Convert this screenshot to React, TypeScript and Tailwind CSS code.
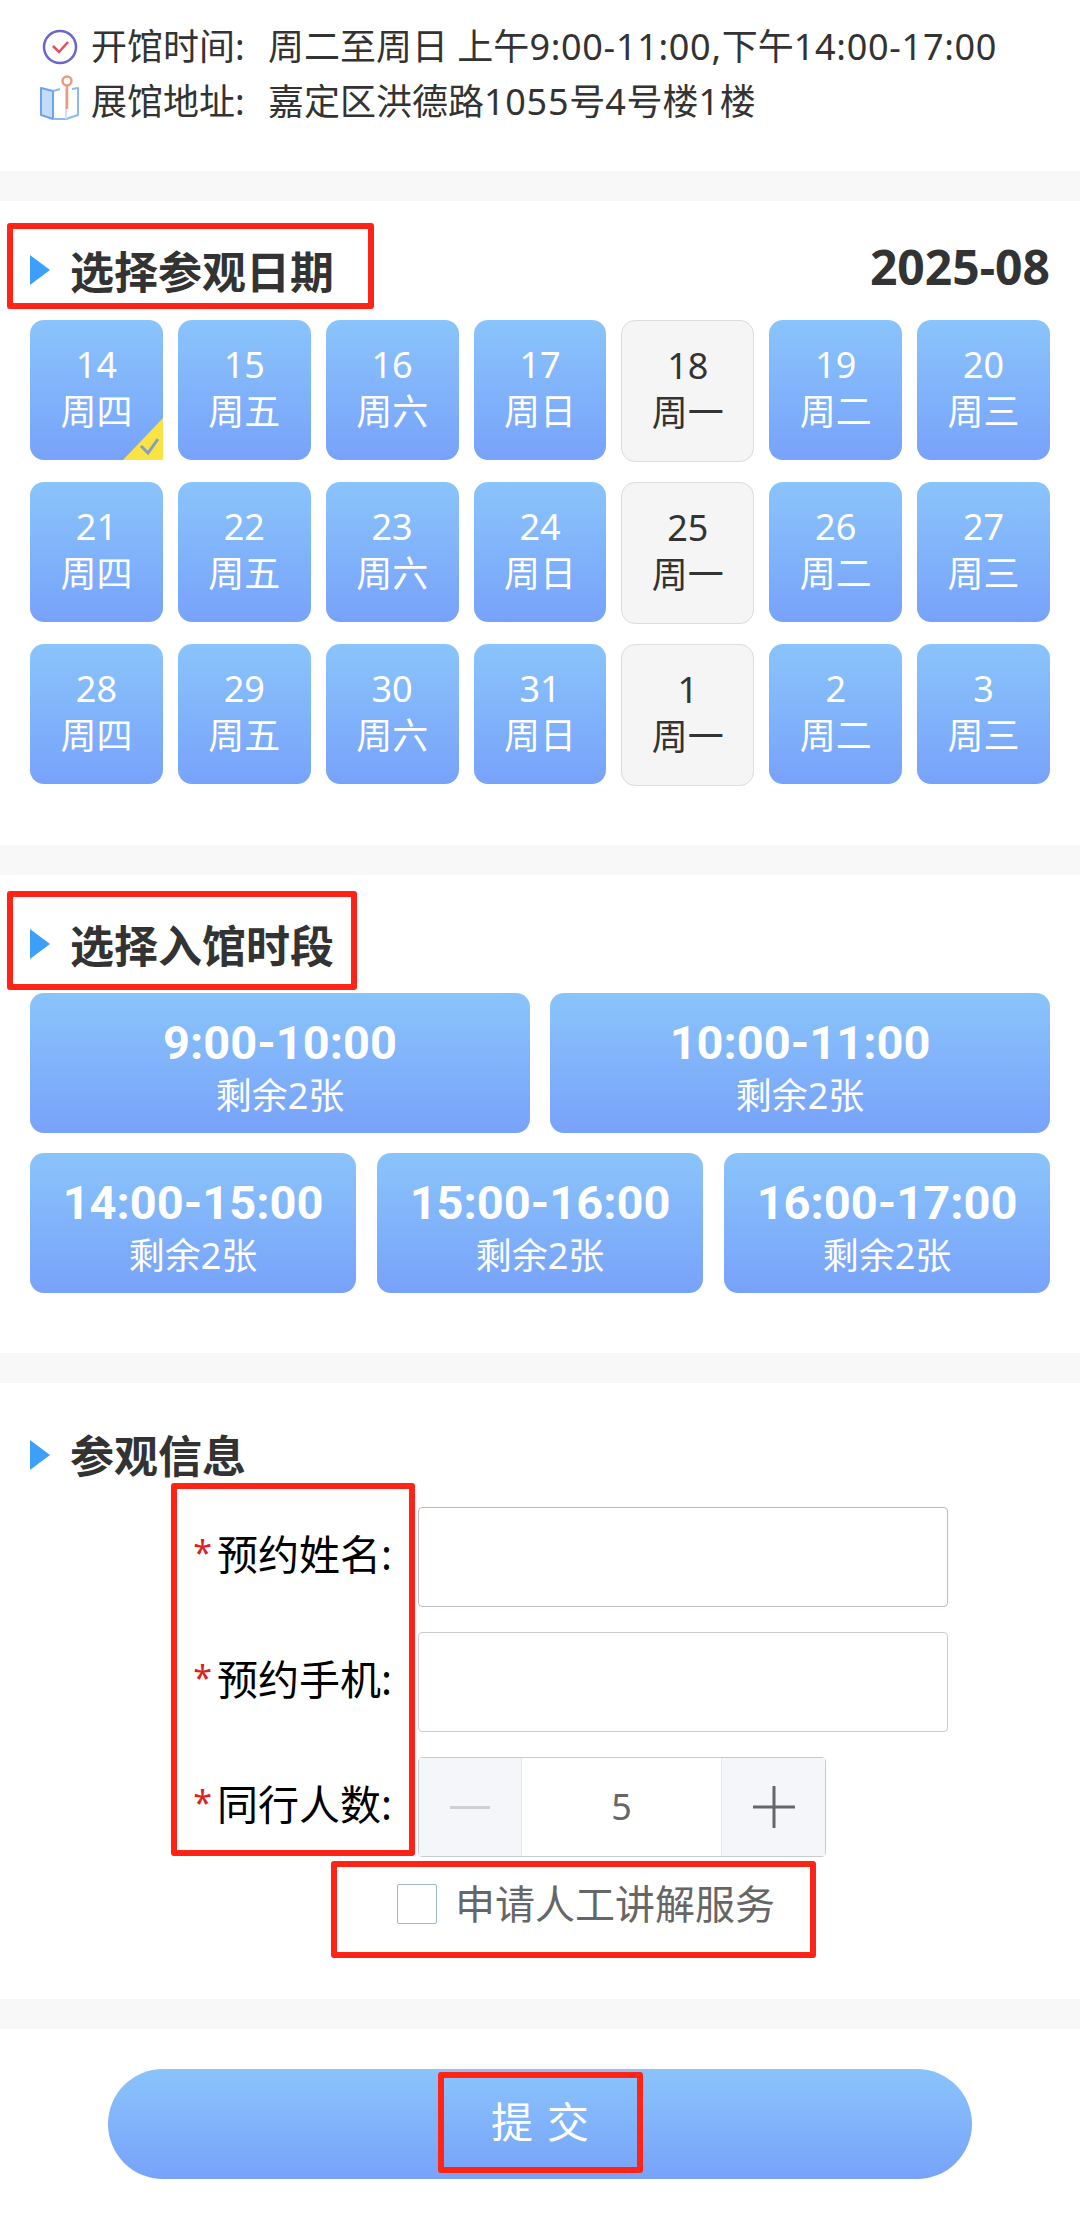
const font = { fontFamily: '"Noto Sans", "Noto Sans CJK SC", sans-serif' };

const rows = [
  [['14', '周四'], ['15', '周五'], ['16', '周六'], ['17', '周日'], ['18', '周一'], ['19', '周二'], ['20', '周三']],
  [['21', '周四'], ['22', '周五'], ['23', '周六'], ['24', '周日'], ['25', '周一'], ['26', '周二'], ['27', '周三']],
  [['28', '周四'], ['29', '周五'], ['30', '周六'], ['31', '周日'], ['1', '周一'], ['2', '周二'], ['3', '周三']],
];

const gradient = 'bg-gradient-to-b from-[#8ac4fb] to-[#78a2fa]';

function Band() {
  return <div className="h-[30px] bg-[#f8f8f8]" />;
}

function Heading({ children }: { children: string }) {
  return (
    <div className="flex items-center gap-[20px]">
      <svg width="20" height="30" viewBox="0 0 20 30" className="shrink-0">
        <path d="M0 0 L20 15 L0 30 Z" fill="#3d9ffa" />
      </svg>
      <span className="text-[44px] leading-[56px] font-bold text-[#333] pt-[3px]">{children}</span>
    </div>
  );
}

function RedBox({ className }: { className: string }) {
  return <div className={`absolute border-[6px] border-[#ff2416] rounded-[3px] ${className}`} />;
}

function DayCell({ day, week, checked }: { day: string; week: string; checked?: boolean }) {
  const closed = week === '周一';
  return (
    <div
      className={`relative rounded-[14px] flex flex-col items-center justify-center pb-[4px] text-[36px] leading-[47px] ${
        closed ? 'bg-[#f5f5f5] border border-[#dcdcdc] text-[#333] h-[142px]' : `${gradient} text-white h-[140px]`
      }`}
    >
      <span>{day}</span>
      <span>{week}</span>
      {checked && (
        <svg width="40" height="42" viewBox="0 0 40 42" className="absolute right-0 bottom-0">
          <path d="M40 0 V42 H0 Z" fill="#fbe344" />
          <path d="M18 28 L25 35 L35 21" fill="none" stroke="#7f9fc8" strokeWidth="3" />
        </svg>
      )}
    </div>
  );
}

function SlotCell({ time }: { time: string }) {
  return (
    <div className={`h-[140px] rounded-[14px] flex flex-col items-center justify-center pt-[9px] text-white ${gradient}`}>
      <span className="font-['Roboto'] text-[47px] leading-[56px] font-bold whitespace-nowrap">{time}</span>
      <span className="text-[36px] leading-[49px] whitespace-nowrap">剩余2张</span>
    </div>
  );
}

function FieldLabel({ children }: { children: string }) {
  return (
    <div className="w-[392px] shrink-0 flex items-baseline justify-end text-[41px] leading-[48px] text-black whitespace-nowrap pb-[3px]">
      <span className="text-[#e0201c] text-[34px] mr-[5px] -translate-y-[5px]">*</span>
      {children}:
    </div>
  );
}

export default function App() {
  return (
    <div className="relative w-[1080px] h-[2220px] bg-white overflow-hidden" style={font}>
      <div className="h-[171px] pt-[21px] pl-[40px] flex flex-col gap-[3px] text-[36px] leading-[52px] text-[#333]">
        <div className="flex items-center">
          <svg width="36" height="36" viewBox="0 0 36 36" className="shrink-0 mr-[13px] ml-[2px]">
            <circle cx="18" cy="18" r="16" fill="none" stroke="#6a66cf" strokeWidth="2.5" />
            <path d="M11 17 L17 23 L26 13" fill="none" stroke="#e0505c" strokeWidth="2.5" />
          </svg>
          <span className="w-[177px] shrink-0 whitespace-nowrap">开馆时间:</span>
          <span className="whitespace-nowrap">
            周二至周日 上午<span className="tracking-[0.7px]">9:00-11:00,</span>下午<span className="tracking-[0.7px]">14:00-17:00</span>
          </span>
        </div>
        <div className="flex items-center">
          <svg width="40" height="46" viewBox="0 0 40 46" className="shrink-0 mr-[11px] -mt-[8px]">
            <path d="M1 13 L13 16 L13 44 L1 40 Z" fill="#c4dcfb" stroke="#6ba3ee" strokeWidth="2" strokeLinejoin="round" />
            <path d="M13 16 L20 14 M32 14 L38 13 L38 40 L26 44 L13 44" fill="none" stroke="#8db8f2" strokeWidth="2" strokeLinejoin="round" />
            <path d="M26 14 L26 44" stroke="#cfe0fa" strokeWidth="2" />
            <path d="M27 11 V34" stroke="#ee9a80" strokeWidth="2.5" />
            <circle cx="27" cy="6" r="4.5" fill="#fff" stroke="#ee9a80" strokeWidth="2.5" />
          </svg>
          <span className="w-[177px] shrink-0 whitespace-nowrap">展馆地址:</span>
          <span className="whitespace-nowrap">
            嘉定区洪德路<span className="tracking-[0.7px]">1055</span>号<span className="tracking-[0.7px]">4</span>号楼<span className="tracking-[0.7px]">1</span>楼
          </span>
        </div>
      </div>

      <Band />

      <section className="h-[644px] px-[30px] pt-[36px]">
        <div className="flex items-center justify-between h-[66px]">
          <Heading>选择参观日期</Heading>
          <span className="text-[48px] leading-[56px] font-bold text-[#333] -mt-[6px]">2025-08</span>
        </div>
        <div className="flex flex-col gap-[22px] mt-[17px]">
          {rows.map((row, r) => (
            <div key={r} className="grid grid-cols-7 gap-[15px] h-[140px]">
              {row.map(([day, week], c) => (
                <DayCell key={c} day={day} week={week} checked={r === 0 && c === 0} />
              ))}
            </div>
          ))}
        </div>
      </section>

      <Band />

      <section className="h-[478px] px-[30px] pt-[36px]">
        <div className="flex items-center h-[66px]">
          <Heading>选择入馆时段</Heading>
        </div>
        <div className="grid grid-cols-2 gap-[20px] mt-[16px]">
          <SlotCell time="9:00-10:00" />
          <SlotCell time="10:00-11:00" />
        </div>
        <div className="grid grid-cols-3 gap-[21px] mt-[20px]">
          <SlotCell time="14:00-15:00" />
          <SlotCell time="15:00-16:00" />
          <SlotCell time="16:00-17:00" />
        </div>
      </section>

      <Band />

      <section className="h-[616px] pt-[42px]">
        <div className="px-[30px]">
          <Heading>参观信息</Heading>
        </div>
        <div className="flex flex-col gap-[25px] mt-[23px]">
          <div className="flex items-center gap-[26px]">
            <FieldLabel>预约姓名</FieldLabel>
            <div className="w-[530px] h-[100px] border border-[#b8bcc4] rounded-[4px]" />
          </div>
          <div className="flex items-center gap-[26px]">
            <FieldLabel>预约手机</FieldLabel>
            <div className="w-[530px] h-[100px] border border-[#c8ccd2] rounded-[4px]" />
          </div>
          <div className="flex items-center gap-[26px]">
            <FieldLabel>同行人数</FieldLabel>
            <div className="w-[408px] h-[100px] border border-[#c8ccd2] rounded-[4px] flex">
              <div className="w-[103px] bg-[#f5f6f9] border-r border-[#e4e6ea] flex items-center justify-center">
                <svg width="40" height="3" viewBox="0 0 40 3">
                  <rect width="40" height="3" fill="#cfd0d4" />
                </svg>
              </div>
              <div className="flex-1 flex items-center justify-center text-[36px] leading-[48px] text-[#666]">5</div>
              <div className="w-[104px] bg-[#f5f6f9] border-l border-[#e4e6ea] flex items-center justify-center">
                <svg width="42" height="42" viewBox="0 0 42 42">
                  <path d="M0 21 H42 M21 0 V42" stroke="#666" strokeWidth="3" />
                </svg>
              </div>
            </div>
          </div>
        </div>
        <div className="flex items-center mt-[27px] pl-[397px]">
          <div className="w-[40px] h-[40px] border border-[#9db8cc] rounded-[2px] shrink-0" />
          <span className="ml-[18px] text-[40px] leading-[40px] text-[#666]">申请人工讲解服务</span>
        </div>
      </section>

      <Band />

      <div className="px-[108px] pt-[40px]">
        <div className={`h-[110px] rounded-[55px] flex items-center justify-center text-white text-[42px] tracking-[14px] pl-[14px] pb-[5px] ${gradient}`}>
          提交
        </div>
      </div>

      <RedBox className="left-[7px] top-[223px] w-[367px] h-[86px]" />
      <RedBox className="left-[7px] top-[891px] w-[350px] h-[99px]" />
      <RedBox className="left-[171px] top-[1483px] w-[244px] h-[373px]" />
      <RedBox className="left-[331px] top-[1861px] w-[485px] h-[97px]" />
      <RedBox className="left-[438px] top-[2072px] w-[205px] h-[101px]" />
    </div>
  );
}
